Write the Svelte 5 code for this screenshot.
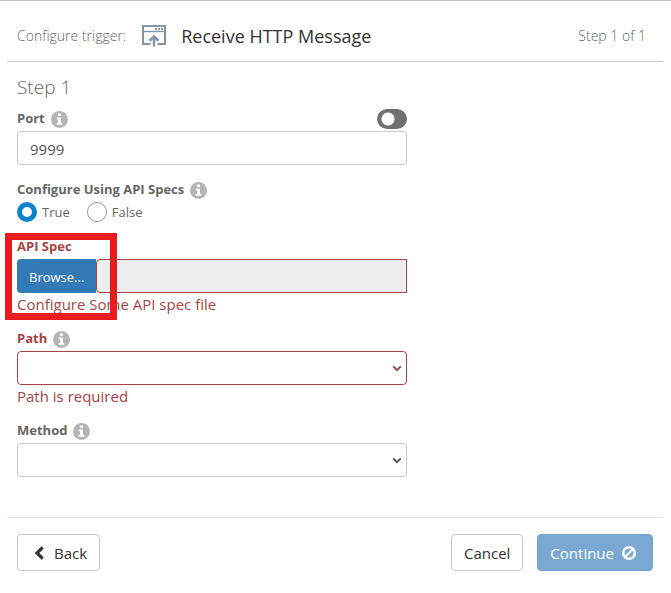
<script>
  let port = $state('9999');
  let useSpecs = $state('true');
  let path = $state('');
  let method = $state('');
  let portOverride = $state(false);
</script>

{#snippet info()}
  <svg class="info" viewBox="0 0 16 16" aria-hidden="true">
    <circle cx="8" cy="8" r="8" fill="#b5b5b5" />
    <path d="M6.6 2.4h2.8v2.4H6.6zM5.4 6h4v5.2h1.3V13H5.3v-1.8h1.3V7.8H5.4z" fill="#fff" />
  </svg>
{/snippet}

{#snippet chevron()}
  <svg class="chevron" viewBox="0 0 10 7" aria-hidden="true">
    <path d="M1.2 1.4 5 5.2l3.8-3.8" fill="none" stroke="currentColor" stroke-width="2" />
  </svg>
{/snippet}

<main>
  <header>
    <span class="muted">Configure trigger:</span>
    <svg class="trigger" viewBox="0 0 24 22" aria-hidden="true">
      <g fill="none" stroke="#8494ac">
        <path d="M8.5 19H1V1h22v18h-7.5" stroke-width="2" />
        <path d="M1 6.5h22" stroke-width="1.4" />
        <path d="M12 21.5V12" stroke-width="2.4" />
        <path d="M7.6 15.8 12 11.6l4.4 4.2" stroke-width="2.6" />
      </g>
      <path d="M13 3h2v2h-2zM16 3h2v2h-2zM19 3h2v2h-2z" fill="#8494ac" />
    </svg>
    <h1>Receive HTTP Message</h1>
    <span class="muted count">Step 1 of 1</span>
  </header>

  <form onsubmit={(e) => e.preventDefault()}>
    <h2>Step 1</h2>

    <div class="field">
      <div class="label-row">
        <label for="port">Port</label>
        {@render info()}
        <input class="toggle" type="checkbox" role="switch" aria-label="Override port" bind:checked={portOverride} />
      </div>
      <input id="port" class="control" type="text" bind:value={port} />
    </div>

    <div class="field" role="radiogroup" aria-labelledby="specs-label">
      <div class="label-row">
        <span id="specs-label" class="label">Configure Using API Specs</span>
        {@render info()}
      </div>
      <div class="radios">
        <label><input type="radio" name="specs" value="true" bind:group={useSpecs} />True</label>
        <label><input type="radio" name="specs" value="false" bind:group={useSpecs} />False</label>
      </div>
    </div>

    <div class="field error">
      <div class="highlight"></div>
      <div class="label-row"><label for="spec">API Spec</label></div>
      <div class="file">
        <button type="button" class="browse">Browse...</button>
        <input id="spec" class="control" type="text" readonly />
      </div>
      <p>Configure Some API spec file</p>
    </div>

    <div class="field error">
      <div class="label-row">
        <label for="path">Path</label>
        {@render info()}
      </div>
      <div class="select">
        <select id="path" class="control" bind:value={path}><option value=""></option></select>
        {@render chevron()}
      </div>
      <p>Path is required</p>
    </div>

    <div class="field">
      <div class="label-row">
        <label for="method">Method</label>
        {@render info()}
      </div>
      <div class="select">
        <select id="method" class="control" bind:value={method}><option value=""></option></select>
        {@render chevron()}
      </div>
    </div>
  </form>

  <footer>
    <button type="button" class="btn back">
      <svg viewBox="0 0 10 14" width="10" height="14" aria-hidden="true">
        <path d="M8.6 1.4 3 7l5.6 5.6" fill="none" stroke="currentColor" stroke-width="3.2" />
      </svg>
      Back
    </button>
    <button type="button" class="btn cancel">Cancel</button>
    <button type="button" class="btn primary" disabled>
      Continue
      <svg viewBox="0 0 14 14" width="14" height="14" aria-hidden="true">
        <g fill="none" stroke="currentColor" stroke-width="2.4">
          <circle cx="7" cy="7" r="5.8" />
          <path d="M3 11 11 3" />
        </g>
      </svg>
    </button>
  </footer>
</main>

<style>
  :global(body) {
    margin: 0;
    background: #fff;
  }
  main {
    box-sizing: border-box;
    padding: 0 8px 0 7px;
    border-top: 1px solid #c3c3c3;
    font-family: 'Segoe UI', 'Open Sans', 'Noto Sans', sans-serif;
    font-size: 15px;
    color: #333;
  }
  header {
    display: flex;
    align-items: center;
    box-sizing: border-box;
    height: 61px;
    padding: 9px 17px 0 10px;
    border-bottom: 1px solid #c3c3c3;
  }
  .muted {
    font-size: 14px;
    font-weight: 300;
    color: #666;
  }
  .trigger {
    width: 24px;
    height: 22px;
    margin: 0 15px 0 16px;
  }
  h1 {
    margin: 0;
    font-size: 18px;
    font-weight: 400;
    line-height: 26px;
  }
  .count {
    margin-left: auto;
  }
  form {
    max-width: 390px;
    padding: 12px 10px 0;
  }
  h2 {
    margin: 0 0 8px;
    font-size: 19px;
    font-weight: 300;
    line-height: 27px;
    color: #666;
  }
  .field {
    position: relative;
    margin-bottom: 15px;
  }
  .label-row {
    display: flex;
    align-items: center;
    gap: 6px;
    height: 20px;
    margin-bottom: 2px;
    font-size: 13px;
    font-weight: 700;
    line-height: 18px;
    color: #666;
  }
  .label-row label,
  .label {
    padding-bottom: 2px;
  }
  .info {
    width: 17px;
    height: 17px;
  }
  .toggle {
    appearance: none;
    width: 30px;
    height: 20px;
    margin: 0 0 0 auto;
    border-radius: 10px;
    background: radial-gradient(circle at 11px 10px, #fff 6px, #707070 7px);
  }
  .toggle:checked {
    background: radial-gradient(circle at 19px 10px, #fff 6px, #0a84d0 7px);
  }
  .control {
    display: block;
    box-sizing: border-box;
    width: 100%;
    height: 34px;
    margin: 0;
    padding: 2px 12px 0;
    border: 1px solid #c8c8c8;
    border-radius: 4px;
    background: #fff;
    font: inherit;
    color: #555;
  }
  .radios {
    display: flex;
    gap: 17px;
  }
  .radios label {
    display: flex;
    align-items: center;
    gap: 5px;
    height: 20px;
    font-size: 13px;
    color: #666;
  }
  .radios input {
    appearance: none;
    box-sizing: border-box;
    width: 20px;
    height: 20px;
    margin: 0;
    border: 1px solid #999;
    border-radius: 50%;
    background: #fff;
  }
  .radios input:checked {
    border: 5px solid #0a84d0;
  }
  .error .label-row,
  .error p,
  .error .chevron {
    color: #a94442;
  }
  .error .control {
    border-color: #a94442;
  }
  .error p {
    margin: 2px 0 0;
    line-height: 19px;
  }
  .file {
    display: flex;
  }
  .browse {
    flex: none;
    height: 34px;
    padding: 2px 12px 0;
    border: 0;
    border-radius: 4px 0 0 4px;
    background: #337ab7;
    font: inherit;
    font-size: 13px;
    color: #fff;
  }
  .file .control {
    flex: 1;
    min-width: 0;
    border-radius: 4px 0 0 4px;
    background: #eee;
  }
  .highlight {
    position: absolute;
    z-index: 1;
    top: -4px;
    left: -12px;
    box-sizing: border-box;
    width: 112px;
    height: 87px;
    border: 7px solid #e81c1c;
    pointer-events: none;
  }
  .select {
    position: relative;
  }
  select {
    appearance: none;
  }
  .chevron {
    position: absolute;
    top: 14px;
    right: 5px;
    width: 10px;
    height: 7px;
    color: #555;
    pointer-events: none;
  }
  footer {
    display: flex;
    align-items: center;
    margin-top: 40px;
    padding: 16px 10px;
    border-top: 1px solid #e2e2e2;
  }
  .btn {
    display: flex;
    align-items: center;
    height: 37px;
    padding: 0 12px;
    border: 1px solid #c8c8c8;
    border-radius: 4px;
    background: #fff;
    font: inherit;
    color: #333;
  }
  .back {
    gap: 10px;
    padding-left: 16px;
  }
  .cancel {
    margin-left: auto;
  }
  .primary {
    gap: 8px;
    margin-left: 14px;
    padding-right: 16px;
    border-color: #74a3ce;
    background: #79a8d2;
    color: #fff;
  }
</style>
